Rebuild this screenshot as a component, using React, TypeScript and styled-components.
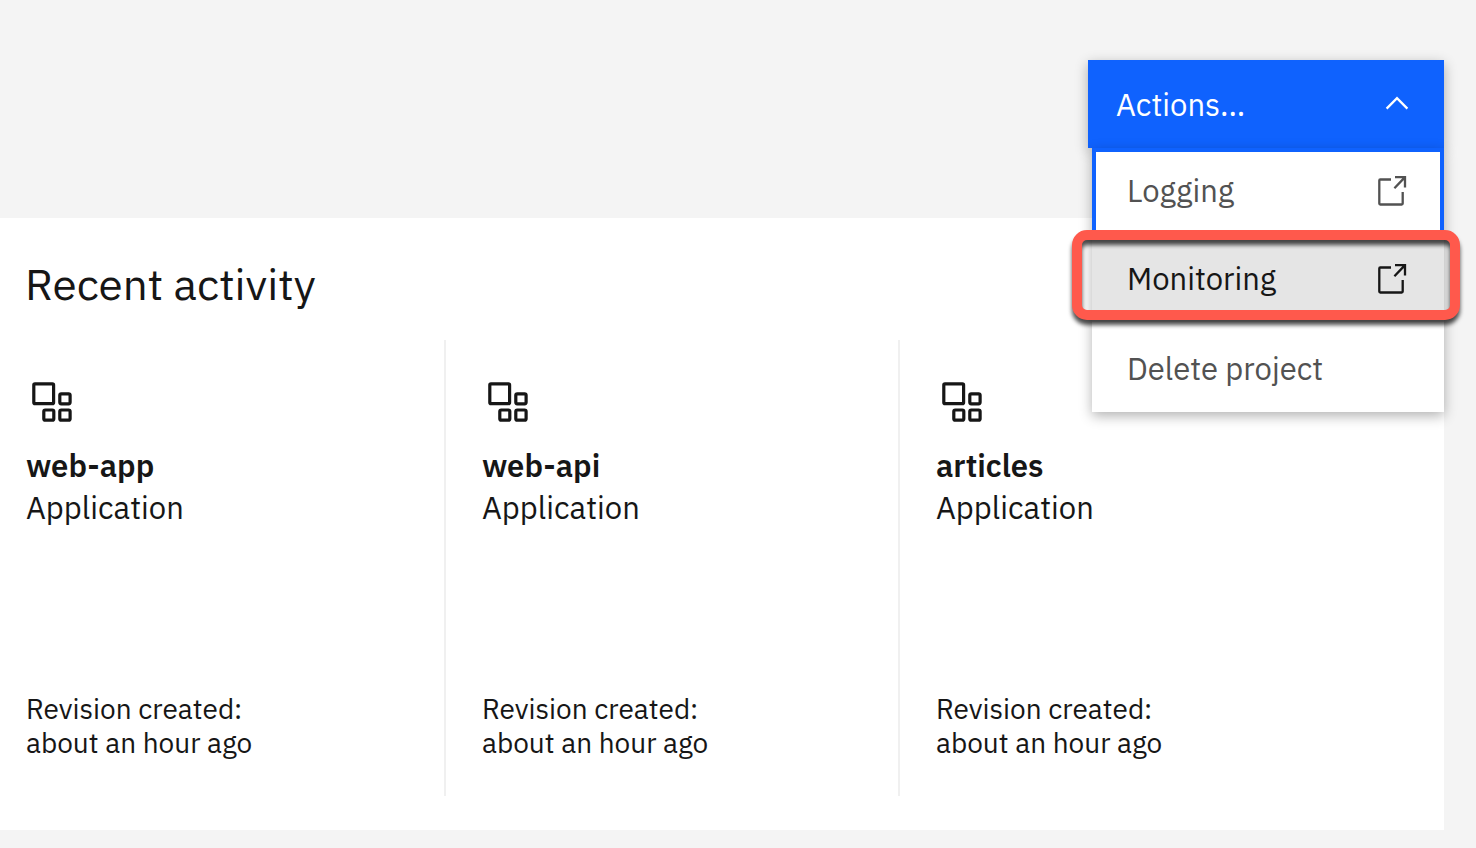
import React from 'react';
import styled, { createGlobalStyle } from 'styled-components';

const GlobalStyle = createGlobalStyle`
  * { box-sizing: border-box; }
  body {
    margin: 0;
    background: #f4f4f4;
    color: #161616;
    font-family: "IBM Plex Sans", "Open Sans", "Noto Sans", sans-serif;
  }
`;

const Page = styled.div`
  min-height: 100vh;
  padding-right: 32px;
`;

const Toolbar = styled.header`
  display: flex;
  justify-content: flex-end;
  height: 218px;
  padding-top: 60px;
`;

const Dropdown = styled.div`
  position: relative;
  width: 356px;
  height: 88px;
  z-index: 1;
`;

const Trigger = styled.button`
  display: flex;
  align-items: center;
  justify-content: space-between;
  width: 100%;
  height: 88px;
  padding: 2px 32px 0 28px;
  border: 0;
  background: #0f62fe;
  color: #fff;
  font: inherit;
  font-size: 31px;
  line-height: 40px;
  box-shadow: 0 4px 12px rgba(0, 0, 0, 0.3);
`;

const Menu = styled.ul`
  position: absolute;
  top: 88px;
  left: 4px;
  right: 0;
  margin: 0;
  padding: 0;
  list-style: none;
  background: #fff;
  box-shadow: 0 4px 12px rgba(0, 0, 0, 0.3);
`;

const MenuItem = styled.li`
  position: relative;
  padding-bottom: 2px;

  &:last-child {
    padding: 2px 0 0;
  }
`;

const MenuButton = styled.button<{ $focused?: boolean; $active?: boolean }>`
  display: flex;
  align-items: center;
  justify-content: space-between;
  width: 100%;
  height: 86px;
  padding: 0 32px 0 31px;
  border: 4px solid ${(p) => (p.$focused ? '#0f62fe' : 'transparent')};
  background: ${(p) => (p.$active ? '#e5e5e5' : '#fff')};
  color: ${(p) => (p.$active ? '#161616' : '#525252')};
  font: inherit;
  font-size: 31px;
  line-height: 40px;
  outline: none;
`;

const Callout = styled.span`
  position: absolute;
  z-index: 1;
  top: -6px;
  right: -16px;
  bottom: 4px;
  left: -20px;
  border: 10px solid #ff594c;
  border-radius: 15px;
  filter: drop-shadow(0 5px 2px rgba(0, 0, 0, 0.7));
  pointer-events: none;
`;

const Panel = styled.main`
  padding: 38px 0 34px;
  background: #fff;
`;

const Title = styled.h1`
  margin: 0 0 28px;
  padding-left: 25px;
  font-size: 44px;
  font-weight: 400;
  line-height: 56px;
`;

const Cards = styled.div`
  display: grid;
  grid-template-columns: 446fr 454fr 544fr;
`;

const Card = styled.article`
  display: flex;
  flex-direction: column;
  min-height: 456px;
  padding: 36px;
  border-right: 2px solid #f0f0f0;

  &:first-child { padding-left: 26px; }
  &:last-child { border-right: 0; }
`;

const Name = styled.h2`
  margin: 17px 0 0;
  font-size: 31px;
  font-weight: 600;
  line-height: 42px;
`;

const Kind = styled.p`
  margin: 0;
  font-size: 31px;
  line-height: 42px;
`;

const Revision = styled.p`
  margin: auto 0 0;
  font-size: 28px;
  line-height: 34px;
`;

const LaunchIcon = () => (
  <svg width="32" height="32" viewBox="0 0 32 32" fill="none" stroke="currentColor" strokeWidth="2.3" aria-hidden="true">
    <path d="M15 4.5H4.3a1 1 0 0 0-1 1V28.5a1 1 0 0 0 1 1H25.7a1 1 0 0 0 1-1V17" />
    <path d="M19 2.1H29V12.4M29 2.1L18.4 13.2" />
  </svg>
);

const ChevronUp = () => (
  <svg width="30" height="30" viewBox="0 0 30 30" fill="none" stroke="currentColor" strokeWidth="2.3" aria-hidden="true">
    <path d="M4.6 18.6L15 8.2L25.4 18.6" />
  </svg>
);

const ApplicationIcon = () => (
  <svg width="52" height="52" viewBox="0 0 52 52" fill="none" stroke="currentColor" strokeWidth="3.2" aria-hidden="true">
    <rect x="7.8" y="7.8" width="19.8" height="19.8" rx="1.2" />
    <rect x="33.8" y="17.8" width="10.3" height="10" rx="1.5" />
    <rect x="17.8" y="34" width="10" height="10.2" rx="1.5" />
    <rect x="33.8" y="34" width="10.3" height="10.2" rx="1.5" />
  </svg>
);

const applications = ['web-app', 'web-api', 'articles'];

export default function App() {
  return (
    <Page>
      <GlobalStyle />
      <Toolbar>
        <Dropdown>
          <Trigger type="button" aria-haspopup="menu" aria-expanded="true">
            Actions...
            <ChevronUp />
          </Trigger>
          <Menu role="menu">
            <MenuItem role="none">
              <MenuButton type="button" role="menuitem" $focused>
                Logging
                <LaunchIcon />
              </MenuButton>
            </MenuItem>
            <MenuItem role="none">
              <MenuButton type="button" role="menuitem" $active>
                Monitoring
                <LaunchIcon />
              </MenuButton>
              <Callout />
            </MenuItem>
            <MenuItem role="none">
              <MenuButton type="button" role="menuitem">Delete project</MenuButton>
            </MenuItem>
          </Menu>
        </Dropdown>
      </Toolbar>
      <Panel>
        <Title>Recent activity</Title>
        <Cards>
          {applications.map((name) => (
            <Card key={name}>
              <ApplicationIcon />
              <Name>{name}</Name>
              <Kind>Application</Kind>
              <Revision>
                Revision created:
                <br />
                about an hour ago
              </Revision>
            </Card>
          ))}
        </Cards>
      </Panel>
    </Page>
  );
}
